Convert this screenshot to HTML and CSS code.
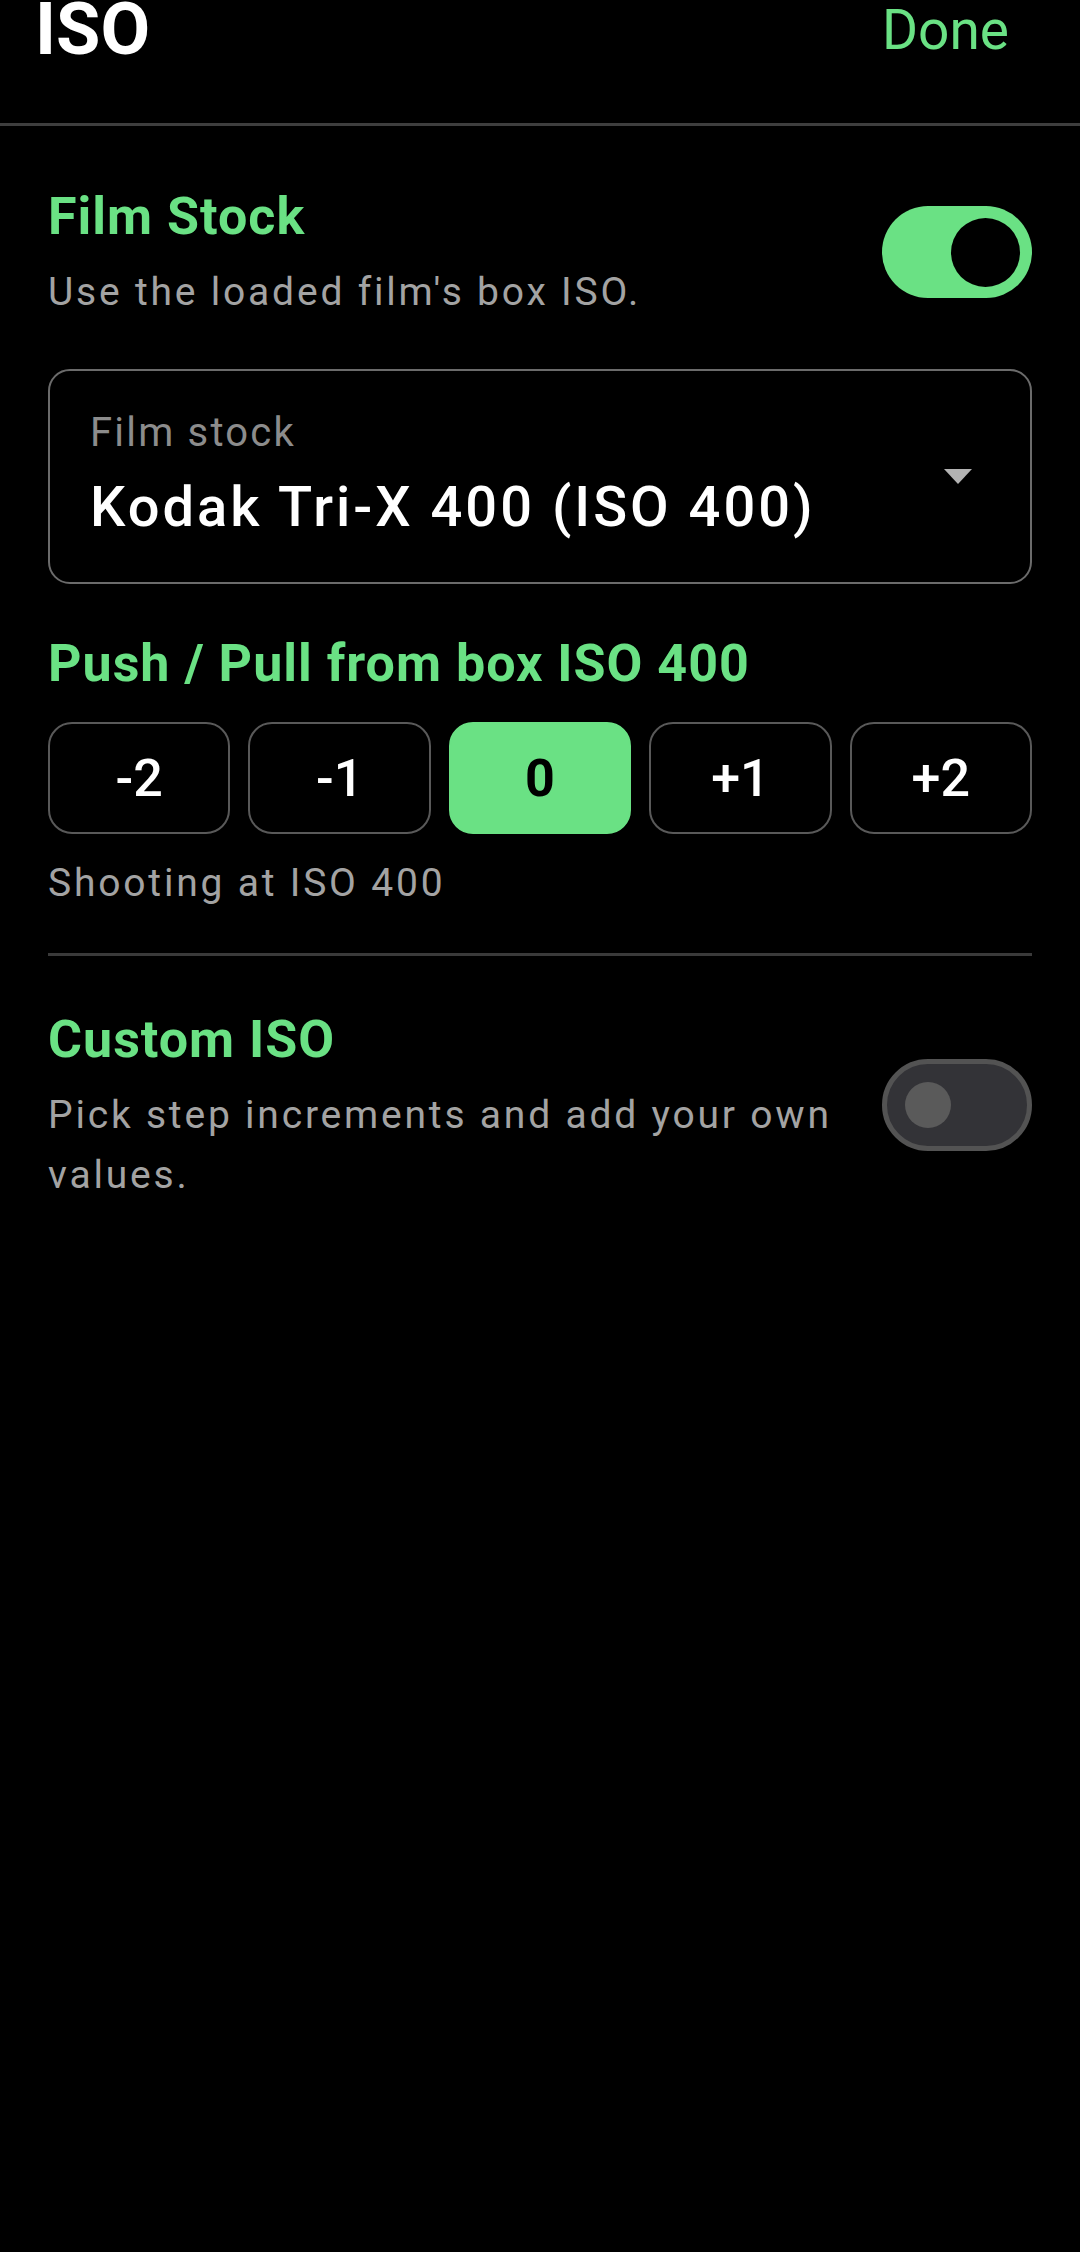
FILE: index.html
```html
<!DOCTYPE html>
<html lang="en">
<head>
  <meta charset="UTF-8" />
  <meta name="viewport" content="width=device-width, initial-scale=1.0"/>
  <title>ISO</title>
  <link rel="stylesheet" href="styles.css">
</head>
<body>

  <div class="top-bar">
    <h1 class="title">ISO</h1>
    <button class="done-btn">Done</button>
  </div>

  <div class="content">

    <div class="setting-row film-row">
      <div class="setting-text">
        <h2 class="setting-title">Film Stock</h2>
        <p class="setting-desc">Use the loaded film's box ISO.</p>
      </div>
      <div class="switch on"><span class="knob"></span></div>
    </div>

    <div class="dropdown">
      <div class="dropdown-text">
        <div class="dropdown-label">Film stock</div>
        <div class="dropdown-value">Kodak Tri-X 400 (ISO 400)</div>
      </div>
      <span class="arrow"></span>
    </div>

    <h2 class="setting-title push-title">Push / Pull from box ISO 400</h2>
    <div class="steps">
      <button class="step">-2</button>
      <button class="step">-1</button>
      <button class="step active">0</button>
      <button class="step">+1</button>
      <button class="step">+2</button>
    </div>
    <p class="setting-desc shooting">Shooting at ISO 400</p>

    <hr class="divider">

    <div class="setting-row custom-row">
      <div class="setting-text">
        <h2 class="setting-title">Custom ISO</h2>
        <p class="setting-desc">Pick step increments and add your own values.</p>
      </div>
      <div class="switch off"><span class="knob"></span></div>
    </div>

  </div>

</body>
</html>
```

FILE: styles.css
```css
body {
  margin: 0;
  padding: 0;
  background: #000;
  color: #fff;
  font-family: Roboto, "Noto Sans", sans-serif;
  width: 1080px;
  height: 2252px;
  overflow: hidden;
}

.top-bar {
  display: flex;
  justify-content: space-between;
  align-items: flex-start;
  height: 123px;
  padding: 0 71px 0 35px;
  border-bottom: 3px solid #3e3e3e;
}

.title {
  margin: 0;
  font-size: 72px;
  font-weight: 700;
  line-height: 60px;
}

.done-btn {
  background: none;
  border: none;
  padding: 0;
  margin: 0;
  font-family: inherit;
  font-size: 55px;
  font-weight: 400;
  line-height: 60px;
  color: #6ae184;
  cursor: pointer;
}

.content {
  padding: 0 48px;
}

.setting-row {
  display: flex;
  align-items: center;
  justify-content: space-between;
  gap: 40px;
}

.film-row {
  margin-top: 61px;
}

.setting-text {
  flex: 1;
}

.setting-title {
  margin: 0;
  font-size: 52px;
  font-weight: 700;
  line-height: 60px;
  letter-spacing: 1px;
  color: #6ae184;
}

.setting-desc {
  margin: 15px 0 0;
  font-size: 39px;
  line-height: 60px;
  letter-spacing: 2.8px;
  color: #a3a3a3;
}

.switch {
  flex: none;
  box-sizing: border-box;
  width: 150px;
  height: 92px;
  border-radius: 46px;
  display: flex;
  align-items: center;
  margin-bottom: 5px;
}

.switch.on {
  background: #6ae184;
  justify-content: flex-end;
  padding: 0 12px;
}

.switch.on .knob {
  width: 69px;
  height: 69px;
  border-radius: 50%;
  background: #000;
}

.switch.off {
  background: #333337;
  border: 5px solid #535353;
  padding: 0 18px;
}

.switch.off .knob {
  width: 46px;
  height: 46px;
  border-radius: 50%;
  background: #5a5a5a;
}

.dropdown {
  margin-top: 47px;
  height: 215px;
  box-sizing: border-box;
  border: 2px solid #6b6b6b;
  border-radius: 22px;
  padding: 38px 58px 43px 40px;
  display: flex;
  align-items: center;
  justify-content: space-between;
}

.dropdown-label {
  font-size: 40px;
  line-height: 48px;
  letter-spacing: 2.2px;
  color: #8c8c8c;
}

.dropdown-value {
  margin-top: 18px;
  font-size: 56px;
  font-weight: 500;
  line-height: 64px;
  letter-spacing: 3px;
  color: #fff;
}

.arrow {
  width: 0;
  height: 0;
  border-left: 14px solid transparent;
  border-right: 14px solid transparent;
  border-top: 15px solid #b3b3b3;
  margin-top: 4px;
}

.push-title {
  margin-top: 50px;
}

.steps {
  display: flex;
  gap: 18px;
  margin-top: 28px;
}

.step {
  flex: 1;
  height: 112px;
  background: #000;
  border: 2px solid #595959;
  border-radius: 24px;
  font-family: inherit;
  font-size: 52px;
  font-weight: 500;
  color: #fff;
  cursor: pointer;
}

.step.active {
  background: #6ae184;
  border-color: #6ae184;
  color: #000;
  font-weight: 700;
}

.shooting {
  margin-top: 19px;
}

.divider {
  margin: 40px 0 0;
  border: none;
  height: 3px;
  background: #3a3a3a;
}

.custom-row {
  margin-top: 54px;
}
```
